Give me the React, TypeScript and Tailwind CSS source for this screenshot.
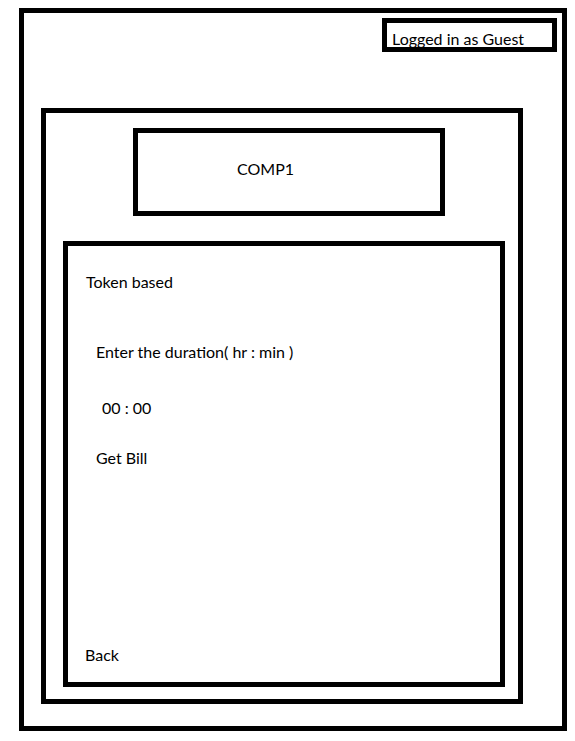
export default function App() {
  return (
    <div className="min-h-screen bg-white text-black font-['Lato','Noto_Sans',sans-serif] text-[16px] leading-[20px]">
      <div className="ml-[19px] pt-[8px]">
        <div className="w-[548px] h-[723px] border-[5px] border-black flex flex-col">
          <div className="flex justify-end pr-[5px] pt-[5px]">
            <div className="w-[175px] h-[34px] border-[5px] border-black overflow-hidden pl-[5px] pt-[6px] whitespace-nowrap">
              Logged in as Guest
            </div>
          </div>

          <div className="ml-[17px] mt-[56px] w-[482px] h-[596px] border-[5px] border-black flex flex-col">
            <div className="ml-[87px] mt-[15px] w-[312px] h-[88px] border-[5px] border-black pl-[99px] pt-[26px]">
              COMP1
            </div>

            <div className="ml-[17px] mt-[25px] w-[442px] h-[446px] border-[5px] border-black flex flex-col">
              <div className="pl-[18px] mt-[26px]">Token based</div>
              <div className="pl-[28px] mt-[50px]">Enter the duration( hr : min )</div>
              <div className="pl-[34px] mt-[36px]">00 : 00</div>
              <div className="pl-[28px] mt-[30px]">Get Bill</div>
              <div className="pl-[17px] mt-auto mb-[17px]">Back</div>
            </div>
          </div>
        </div>
      </div>
    </div>
  );
}
